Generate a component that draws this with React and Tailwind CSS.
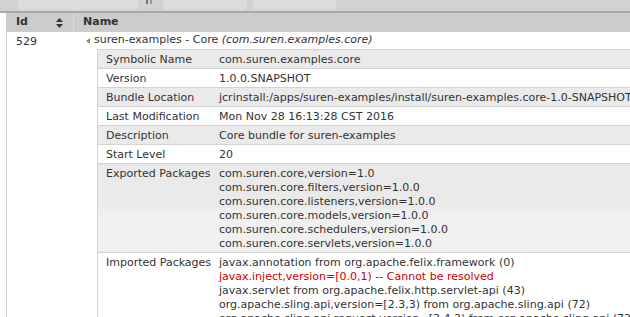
import React from 'react';

const details = [
  { label: 'Symbolic Name', lines: ['com.suren.examples.core'] },
  { label: 'Version', lines: ['1.0.0.SNAPSHOT'] },
  { label: 'Bundle Location', lines: ['jcrinstall:/apps/suren-examples/install/suren-examples.core-1.0-SNAPSHOT.jar'] },
  { label: 'Last Modification', lines: ['Mon Nov 28 16:13:28 CST 2016'] },
  { label: 'Description', lines: ['Core bundle for suren-examples'] },
  { label: 'Start Level', lines: ['20'] },
  {
    label: 'Exported Packages',
    tall: true,
    lines: [
      'com.suren.core,version=1.0',
      'com.suren.core.filters,version=1.0.0',
      'com.suren.core.listeners,version=1.0.0',
      'com.suren.core.models,version=1.0.0',
      'com.suren.core.schedulers,version=1.0.0',
      'com.suren.core.servlets,version=1.0.0',
    ],
  },
  {
    label: 'Imported Packages',
    lines: [
      'javax.annotation from org.apache.felix.framework (0)',
      { text: 'javax.inject,version=[0.0,1) -- Cannot be resolved', error: true },
      'javax.servlet from org.apache.felix.http.servlet-api (43)',
      'org.apache.sling.api,version=[2.3,3) from org.apache.sling.api (72)',
      'org.apache.sling.api.request,version=[2.4,2) from org.apache.sling.api (72)',
      'org.apache.sling.api.resource,version=[2.5,3) from org.apache.sling.api (72)',
    ],
  },
];

const SortIcon = () => (
  <svg width="7" height="10" viewBox="0 0 7 10" className="block">
    <polygon points="3.5,0 7,4 0,4" fill="#333" />
    <polygon points="0,6 7,6 3.5,10" fill="#333" />
  </svg>
);

const App = () => {
  return (
    <div className="w-[630px] h-[317px] overflow-hidden bg-white font-['DejaVu_Sans',Verdana,sans-serif] text-[11px] text-[#333]">
      {/* toolbar, mostly scrolled off */}
      <div className="h-[11px] bg-[#d2d2d2] flex items-start">
        <div className="ml-[18px] w-[120px] h-[10px] bg-[#dcdcdc] rounded-b-[4px]" />
        <div className="ml-[8px] flex gap-[2px]">
          <div className="w-[2px] h-[4px] bg-[#777]" />
          <div className="w-[2px] h-[4px] bg-[#999]" />
        </div>
        <div className="ml-[11px] w-[84px] h-[10px] bg-[#dcdcdc] rounded-b-[4px]" />
        <div className="ml-[6px] w-[83px] h-[10px] bg-[#dcdcdc] rounded-b-[4px]" />
      </div>
      <div className="h-[2px] bg-[#a9a9a9]" />

      <div className="ml-[6px] border-l border-[#cfcfcf] w-[700px]">
        {/* header */}
        <div className="flex h-[19px] bg-[#cccccc] font-bold items-center">
          <div className="w-[66px] pl-[9px] pr-[10px] flex items-center justify-between h-full">
            <span>Id</span>
            <SortIcon />
          </div>
          <div className="border-l border-[#dadada] h-full pl-[9px] flex items-center">Name</div>
        </div>

        {/* bundle row */}
        <div className="flex">
          <div className="w-[66px] pl-[9px] pt-[3px] leading-[14px]">529</div>
          <div className="flex-1">
            <div className="flex items-center h-[17px] pl-[13px]">
              <svg width="4" height="6" viewBox="0 0 4 6" className="block mr-[4px]">
                <polygon points="4,0 4,6 0,3" fill="#8a8a8a" />
              </svg>
              <span>
                suren-examples - Core <i>(com.suren.examples.core)</i>
              </span>
            </div>
            <div className="ml-[24px] border-l border-t border-[#d4d4d4]">
              {details.map((row, i) => (
                <div
                  key={row.label}
                  className={
                    'flex border-b border-[#d4d4d4] pt-[3px] pb-[1px] leading-[14px] ' +
                    (i % 2 === 0
                      ? row.tall
                        ? 'bg-[linear-gradient(#eaeaea_0px,#eaeaea_43px,#f0f0f0_47px,#f0f0f0_100%)]'
                        : 'bg-[#eaeaea]'
                      : 'bg-white')
                  }
                >
                  <div className="w-[121px] shrink-0 pl-[8px]">{row.label}</div>
                  <div className="whitespace-nowrap">
                    {row.lines.map((l, j) =>
                      typeof l === 'string' ? (
                        <div key={j}>{l}</div>
                      ) : (
                        <div key={j} className="text-[#cc0000]">
                          {l.text}
                        </div>
                      )
                    )}
                  </div>
                </div>
              ))}
            </div>
          </div>
        </div>
      </div>
    </div>
  );
};

export default App;
